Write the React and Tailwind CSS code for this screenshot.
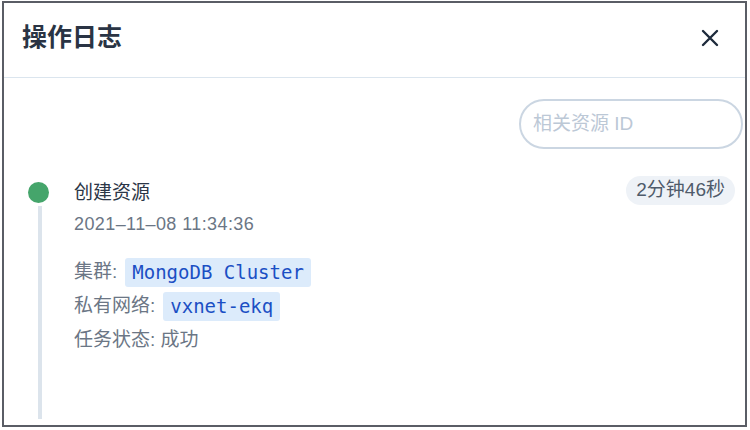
import React from 'react';

const font = { fontFamily: '"Liberation Sans", "Noto Sans CJK SC", sans-serif' };

const Tag = ({ children }) => (
  <span className="inline-flex items-center h-[29px] px-[7px] rounded-[3px] bg-[#dcebfb] text-[#1b4fc4] font-['DejaVu_Sans_Mono',monospace] text-[19px] leading-none">
    {children}
  </span>
);

export default function App() {
  return (
    <div className="w-[750px] h-[430px] bg-white pt-[1px] pl-[2px]" style={font}>
      <div className="w-[745px] h-[426px] border-2 border-[#5a5d65] bg-white flex flex-col overflow-hidden">
        {/* header */}
        <div className="h-[75px] shrink-0 flex items-center justify-between pl-[18px] pr-[26px] border-b border-[#dbe5ee]">
          <h1 className="text-[25px] font-semibold text-[#2a3444] leading-none -mt-[6px]">操作日志</h1>
          <button className="text-[#1e2b3c] -mt-[4px]" aria-label="close">
            <svg width="18" height="18" viewBox="0 0 18 18" fill="none" stroke="currentColor" strokeWidth="2.4" strokeLinecap="round">
              <path d="M2 2L16 16M16 2L2 16" />
            </svg>
          </button>
        </div>

        {/* search */}
        <div className="flex justify-end pt-[21px] pr-[2px]">
          <div className="w-[224px] h-[50px] rounded-full border-2 border-[#cbd6e2] flex items-center px-[12px]">
            <input
              className="w-full outline-none text-[19px] placeholder:text-[#bcc8d6] bg-transparent"
              placeholder="相关资源 ID"
            />
          </div>
        </div>

        {/* timeline */}
        <div className="flex flex-1 pt-[33px] pl-[24px] pr-[10px]">
          <div className="flex flex-col items-center w-[21px] shrink-0 pb-[6px]">
            <div className="w-[21px] h-[21px] rounded-full bg-[#45a56b]" />
            <div className="w-[4px] flex-1 mt-[3px] bg-[#dce4ec] ml-[3px]" />
          </div>
          <div className="flex-1 ml-[25px] -mt-[6px]">
            <div className="flex items-start justify-between">
              <div className="text-[19px] text-[#2c3647] leading-[30px] pt-[2px]">创建资源</div>
              <span className="h-[29px] px-[10px] rounded-full bg-[#eef2f7] text-[#4f5b6b] text-[19px] flex items-center">
                2分钟46秒
              </span>
            </div>
            <div className="text-[18px] tracking-[0.4px] text-[#6b7685] leading-[30px] mt-[1px]">2021–11–08 11:34:36</div>
            <div className="mt-[19px] flex flex-col gap-[5px] text-[19px] text-[#6b7685]">
              <div className="flex items-center gap-[8px]">
                <span>集群:</span>
                <Tag>MongoDB Cluster</Tag>
              </div>
              <div className="flex items-center gap-[8px]">
                <span>私有网络:</span>
                <Tag>vxnet-ekq</Tag>
              </div>
              <div className="leading-[30px] -mt-[1px]">任务状态: 成功</div>
            </div>
          </div>
        </div>
      </div>
    </div>
  );
}
